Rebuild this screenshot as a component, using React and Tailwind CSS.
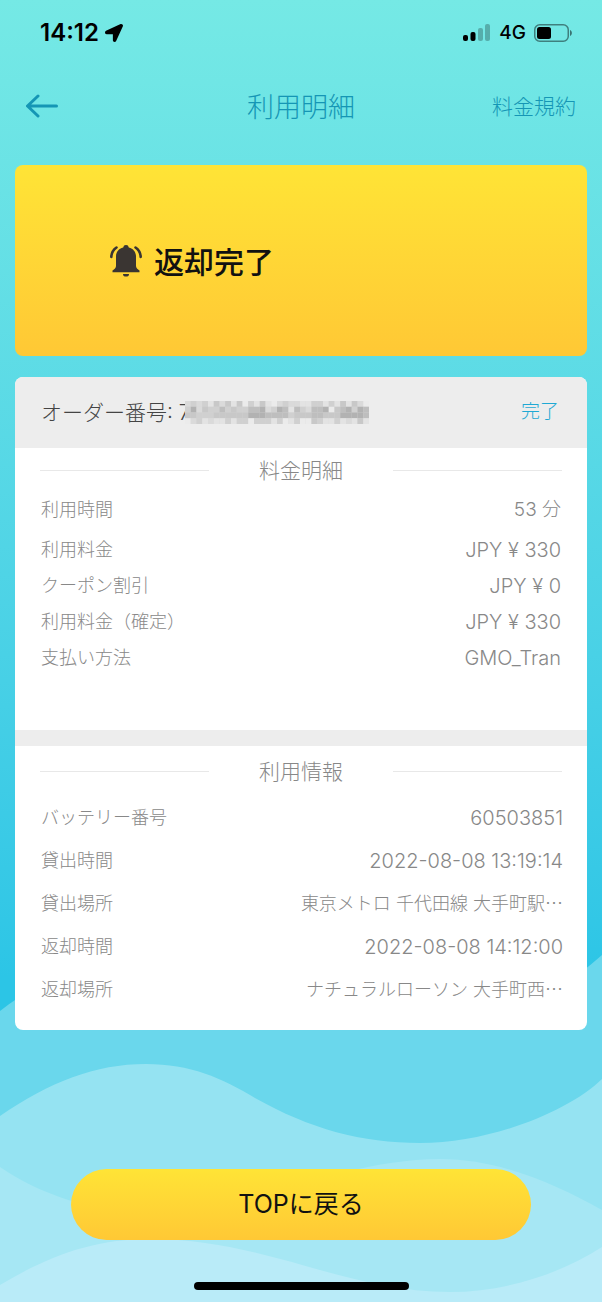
import { FaLocationArrow } from "react-icons/fa";

const charges = [
  { label: "利用時間", value: "53 分", size: "text-[19px]" },
  { label: "利用料金", value: "JPY ¥ 330" },
  { label: "クーポン割引", value: "JPY ¥ 0" },
  { label: "利用料金（確定）", value: "JPY ¥ 330" },
  { label: "支払い方法", value: "GMO_Tran" },
];

const usage = [
  { label: "バッテリー番号", value: "60503851" },
  { label: "貸出時間", value: "2022-08-08 13:19:14" },
  {
    label: "貸出場所",
    value: "東京メトロ 千代田線 大手町駅⋯",
    size: "text-lg",
  },
  { label: "返却時間", value: "2022-08-08 14:12:00" },
  {
    label: "返却場所",
    value: "ナチュラルローソン 大手町西⋯",
    size: "text-lg",
  },
];

// one string per row, each digit is a shade from light (0) to dark (7)
const mosaic = [
  "23231424140314102322113313141420",
  "36243353433556236515325560456365",
  "44333444444666555534445544466665",
  "02312113133033313013004311312141",
];

const shades = [
  "#ebebeb",
  "#e3e3e3",
  "#dadada",
  "#d0d0d0",
  "#c8c8c8",
  "#bebebe",
  "#b2b2b2",
  "#a8a8a8",
];

export default function App() {
  return (
    <div className="relative isolate flex min-h-screen flex-col overflow-hidden bg-linear-to-b from-[#75e9e5] to-[#2cc5e6] to-75% font-['Inter','Noto_Sans_CJK_JP',sans-serif]">
      <Waves />
      <StatusBar />

      <header className="grid h-20 grid-cols-3 items-center px-[26px] text-[#1596b5]">
        <button aria-label="戻る" className="w-fit cursor-pointer">
          <svg className="h-6 w-8" viewBox="0 0 32 24" fill="none">
            <path
              d="M12 2 1.500 12l10.500 10M2 12h28.500"
              stroke="currentColor"
              strokeWidth="3"
              strokeLinecap="round"
              strokeLinejoin="round"
            />
          </svg>
        </button>
        <h1 className="pt-1 text-center text-[27px] font-light">利用明細</h1>
        <a href="#terms" className="pt-0.5 text-right text-[21px] font-light">
          料金規約
        </a>
      </header>

      <main className="flex flex-1 flex-col px-[15px] pt-[19px]">
        <section className="flex h-[191px] items-center gap-3 rounded-lg bg-linear-to-b from-[#ffe436] to-[#ffc835] pl-[95px]">
          <Bell />
          <h2 className="pt-1 text-[30px] font-medium text-[#111]">返却完了</h2>
        </section>

        <section className="mt-[21px] overflow-hidden rounded-lg bg-white pb-[19px] text-[#888]">
          <div className="flex h-[71px] items-center bg-[#ededed] pr-7 pl-[26px] text-[21px] font-light">
            <p className="text-[#444]">オーダー番号: 7</p>
            <Mosaic />
            <p className="ml-auto text-[19px] text-[#1fa9d4]">完了</p>
          </div>

          <SectionTitle height="h-11">料金明細</SectionTitle>
          <dl className="px-[26px] pb-[54px]">
            {charges.map((item) => (
              <Row key={item.label} {...item} height="h-9 first:mb-1" />
            ))}
          </dl>

          <div className="h-4 bg-[#ededed]" />

          <SectionTitle height="h-[50px]">利用情報</SectionTitle>
          <dl className="pr-6 pl-[26px]">
            {usage.map((item) => (
              <Row key={item.label} {...item} height="h-[43px]" />
            ))}
          </dl>
        </section>

        <button className="mx-14 mt-[139px] h-[71px] cursor-pointer rounded-full bg-linear-to-b from-[#ffe436] to-[#ffc835] text-[25px] text-[#111]">
          TOPに戻る
        </button>
      </main>

      <div className="mx-auto mt-[42px] mb-3 h-2 w-[215px] rounded-full bg-black" />
    </div>
  );
}

function StatusBar() {
  return (
    <div className="flex h-[66px] items-center justify-between pr-[30px] pl-10 text-black">
      <div className="flex items-center gap-[6px]">
        <span className="text-2xl font-semibold">14:12</span>
        <FaLocationArrow className="size-[18px]" />
      </div>
      <div className="flex items-center gap-2">
        <svg className="h-[18px] w-7" viewBox="0 0 28 18">
          <rect x="0" y="11" width="5" height="6" rx="2" />
          <rect x="7.500" y="8" width="5" height="9" rx="2" />
          <rect x="15" y="4" width="5" height="13" rx="2" opacity="0.250" />
          <rect x="22" y="0" width="5" height="17" rx="2" opacity="0.250" />
        </svg>
        <span className="text-[19px] font-medium">4G</span>
        <svg className="h-[18px] w-[38px]" viewBox="0 0 38 18">
          <rect
            x="0.750"
            y="0.750"
            width="33.500"
            height="16.500"
            rx="5"
            fill="none"
            stroke="#000"
            strokeOpacity="0.450"
            strokeWidth="1.500"
          />
          <rect x="3" y="3" width="14" height="12" rx="2.500" />
          <path d="M36 6c2.500 1 2.500 5 0 6z" opacity="0.500" />
        </svg>
      </div>
    </div>
  );
}

function SectionTitle({ children, height }) {
  return (
    <div className={`flex items-center gap-[50px] px-[25px] ${height}`}>
      <span className="h-px flex-1 bg-[#e8e8e8]" />
      <h3 className="pt-0.5 text-[21px] font-light">{children}</h3>
      <span className="h-px flex-1 bg-[#e8e8e8]" />
    </div>
  );
}

function Row({ label, value, height, size = "text-xl" }) {
  return (
    <div className={`flex items-center justify-between font-light ${height}`}>
      <dt className="text-lg">{label}</dt>
      <dd className={size}>{value}</dd>
    </div>
  );
}

// hides the rest of the order number
function Mosaic() {
  return (
    <svg
      className="-ml-[6px] h-[23px] w-[184px]"
      viewBox="0 0 32 4"
      preserveAspectRatio="none"
    >
      <rect width="32" height="4" fill="#d6d6d6" />
      {mosaic.map((row, y) =>
        row.split("").map((n, x) => (
          <rect key={`${x}-${y}`} x={x} y={y} width="1" height="1" fill={shades[n]} />
        ))
      )}
    </svg>
  );
}

function Bell() {
  return (
    <svg className="h-8 w-8" viewBox="0 0 32 32" fill="#3a3532">
      <path d="M16 0a2.800 2.800 0 0 1 2.800 2.400C23.500 3.600 26 7 26 11.500v9.500c0 2 1.500 3.200 3.500 4.500v1.800H2.500v-1.800c2-1.300 3.500-2.500 3.500-4.500v-9.500C6 7 8.500 3.600 13.200 2.400A2.800 2.800 0 0 1 16 0z" />
      <path d="M13 29h6a3 2.600 0 0 1-6 0z" />
      <path
        d="M6.500 2.500C3.500 4.500 1.500 7.500 1.300 12M25.500 2.500c3 2 5 5 5.200 9.500"
        fill="none"
        stroke="#3a3532"
        strokeWidth="2.600"
        strokeLinecap="round"
      />
    </svg>
  );
}

function Waves() {
  return (
    <svg
      className="absolute inset-x-0 bottom-0 -z-10 h-[402px] w-full"
      viewBox="0 900 602 402"
      preserveAspectRatio="none"
    >
      <path d="M0 1011C60 965 120 950 180 960S340 1020 430 1020S550 1000 602 955V1302H0z" fill="#6ad7ec" />
      <path d="M0 1116C50 1082 95 1064 146 1064C190 1064 222 1078 255 1098C310 1129 362 1143 420 1143C490 1143 568 1112 602 1079V1302H0z" fill="#95e3f2" />
      <path d="M0 1167C40 1194 90 1212 150 1212C250 1212 340 1159 440 1159C500 1159 555 1184 602 1210V1302H0z" fill="#a6e7f4" />
      <path d="M0 1285C50 1255 95 1239 150 1239C265 1239 345 1292 450 1292C505 1292 560 1274 602 1247V1302H0z" fill="#b9ebf8" />
    </svg>
  );
}
